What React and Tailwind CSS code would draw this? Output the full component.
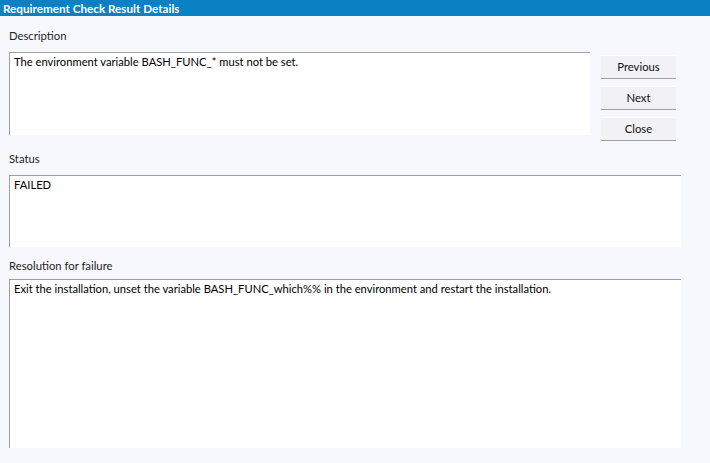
import React from 'react';

const font = { fontFamily: 'Lato, "Noto Sans", sans-serif' };

const Field = ({ label, text, gap, className }) => (
  <div className="flex flex-col">
    <div className="h-[16px] text-[11.3px] leading-[16px] text-[#1e1e1e]">{label}</div>
    <div className={`${gap} bg-white border-t border-l border-[#a0a0a0] px-[4px] pt-[1px] text-[11.2px] leading-[16px] text-black ${className}`}>
      {text}
    </div>
  </div>
);

const DialogButton = ({ children }) => (
  <button className="w-[75px] h-[24px] bg-[#f2f2f6] border-t border-white border-b border-b-[#a0a0a0] text-[11.3px] leading-[16px] text-[#111]">
    {children}
  </button>
);

export default function App() {
  return (
    <div className="w-[710px] h-[463px] bg-[#f7f8fd] overflow-hidden" style={font}>
      {/* Title */}
      <div className="h-[16px] bg-[#0b80c3] px-[3px] text-[11.7px] leading-[16px] font-bold text-white">
        Requirement Check Result Details
      </div>

      <div className="pl-[9px] pr-[29px] pt-[12px] flex flex-col">
        <div className="flex items-start gap-[11px] h-[107px]">
          <div className="w-[581px]">
            <Field
              label="Description"
              text="The environment variable BASH_FUNC_* must not be set."
              gap="mt-[8px]"
              className="h-[83px]"
            />
          </div>
          <div className="flex flex-col gap-[7px] pt-[27px]">
            <DialogButton>Previous</DialogButton>
            <DialogButton>Next</DialogButton>
            <DialogButton>Close</DialogButton>
          </div>
        </div>

        <div className="mt-[16px]">
          <Field label="Status" text="FAILED" gap="mt-[8px]" className="h-[72px]" />
        </div>

        <div className="mt-[11px]">
          <Field
            label="Resolution for failure"
            text="Exit the installation, unset the variable BASH_FUNC_which%% in the environment and restart the installation."
            gap="mt-[5px]"
            className="h-[169px]"
          />
        </div>
      </div>
    </div>
  );
}
